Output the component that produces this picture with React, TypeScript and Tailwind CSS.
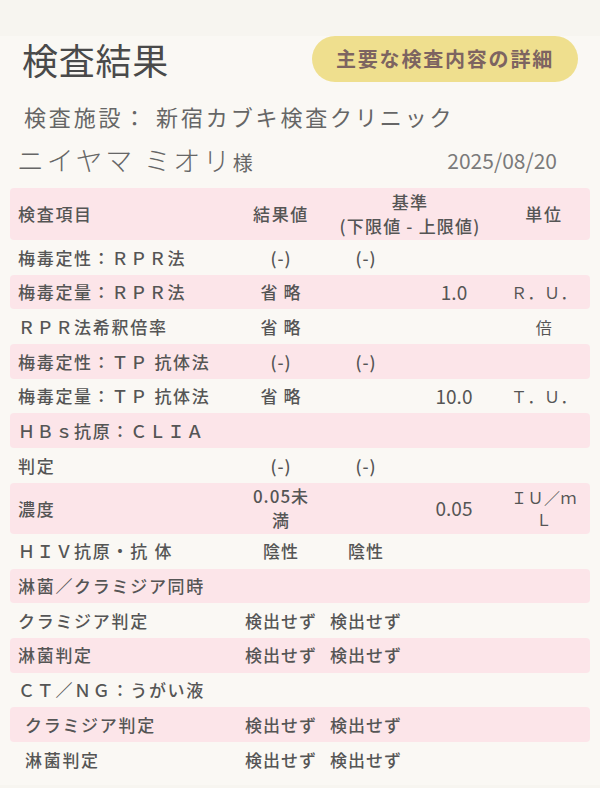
type Row = {
  name: string;
  result?: string[];
  low?: string;
  high?: string;
  unit?: string[];
  tall?: boolean;
  indent?: boolean;
};

const rows: Row[] = [
  { name: "梅毒定性：ＲＰＲ法", result: ["(-)"], low: "(-)" },
  { name: "梅毒定量：ＲＰＲ法", result: ["省 略"], high: "1.0", unit: ["Ｒ．Ｕ．"] },
  { name: "ＲＰＲ法希釈倍率", result: ["省 略"], unit: ["倍"] },
  { name: "梅毒定性：ＴＰ 抗体法", result: ["(-)"], low: "(-)" },
  { name: "梅毒定量：ＴＰ 抗体法", result: ["省 略"], high: "10.0", unit: ["Ｔ．Ｕ．"] },
  { name: "ＨＢｓ抗原：ＣＬＩＡ" },
  { name: "判定", result: ["(-)"], low: "(-)" },
  { name: "濃度", result: ["0.05未", "満"], high: "0.05", unit: ["ＩＵ／ｍ", "Ｌ"], tall: true },
  { name: "ＨＩＶ抗原・抗 体", result: ["陰性"], low: "陰性" },
  { name: "淋菌／クラミジア同時" },
  { name: "クラミジア判定", result: ["検出せず"], low: "検出せず" },
  { name: "淋菌判定", result: ["検出せず"], low: "検出せず" },
  { name: "ＣＴ／ＮＧ：うがい液" },
  { name: "クラミジア判定", result: ["検出せず"], low: "検出せず", indent: true },
  { name: "淋菌判定", result: ["検出せず"], low: "検出せず", indent: true },
];

const grid = "grid grid-cols-[230px_82px_88px_88px_1fr] items-center";

export default function App() {
  return (
    <div className="min-h-screen bg-[#f7f5f0] pt-[10px] font-['Noto_Sans_CJK_JP','Noto_Sans',sans-serif] text-[#555]">
      <div className="bg-[#faf8f4] px-[10px] pb-[8px]">
        <div className="mt-[26px] flex h-[46px] items-center justify-between pl-[12px] pr-[12px]">
          <h1 className="text-[36px] font-normal leading-none tracking-[0.02em] text-[#4a4a4a]">検査結果</h1>
          <div className="flex h-[46px] w-[266px] items-center justify-center rounded-full bg-[#efdf8e] text-[20px] font-bold tracking-[0.09em] text-[#7d6461]">
            主要な検査内容の詳細
          </div>
        </div>

        <p className="mt-[19px] pl-[14px] text-[22px] leading-[30px] tracking-[0.13em] text-[#666]">
          検査施設： 新宿カブキ検査クリニック
        </p>

        <div className="mt-[12px] flex h-[36px] items-center justify-between pl-[7px] pr-[33px]">
          <span className="text-[27px] font-light leading-[36px] tracking-[0.1em] text-[#666]">
            ニイヤマ ミオリ<span className="text-[20px] font-normal tracking-normal">様</span>
          </span>
          <span className="text-[21px] text-[#7a7a7a]">2025/08/20</span>
        </div>

        <div className="mt-[9px] text-[17px] font-medium tracking-[0.1em]">
          <div className={`${grid} h-[52px] rounded-[4px] bg-[#fce5e9]`}>
            <div className="pl-[8px]">検査項目</div>
            <div className="text-center">結果値</div>
            <div className="col-span-2 text-center leading-[24px] tracking-[0.07em]">
              <div>基準</div>
              <div>(下限値 - 上限値)</div>
            </div>
            <div className="text-center">単位</div>
          </div>

          {rows.map((r, i) => (
            <div
              key={i}
              className={`${grid} ${r.tall ? "h-[51px]" : "h-[34.7px]"} rounded-[4px] ${i % 2 === 1 ? "bg-[#fce5e9]" : ""}`}
            >
              <div className={`whitespace-nowrap ${r.indent ? "pl-[15px]" : "pl-[8px]"}`}>{r.name}</div>
              <div className={`text-center tracking-[0.06em] ${r.tall ? "leading-[24px]" : ""}`}>
                {r.result?.map((t, j) => (
                  <div key={j}>{t}</div>
                ))}
              </div>
              <div className="text-center tracking-[0.06em]">{r.low}</div>
              <div className="text-center text-[19px] font-normal tracking-normal">{r.high}</div>
              <div className="text-center text-[16px] font-normal leading-[22px] tracking-[0.03em]">
                {r.unit?.map((t, j) => (
                  <div key={j}>{t}</div>
                ))}
              </div>
            </div>
          ))}
        </div>
      </div>
    </div>
  );
}
